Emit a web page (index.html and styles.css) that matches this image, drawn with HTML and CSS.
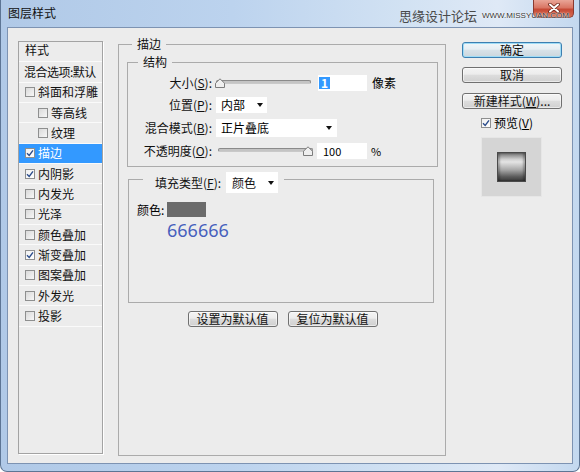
FILE: index.html
```html
<!DOCTYPE html>
<html lang="zh-CN">
<head>
<meta charset="utf-8">
<title>图层样式</title>
<link rel="stylesheet" href="styles.css">
</head>
<body>
<div class="window">
  <div class="titlebar">
    <span class="title">图层样式</span>
    <span class="watermark"><span class="wm-cn">思缘设计论坛</span><span class="wm-url">WWW.MISSYUAN.COM</span></span>
    <span class="close"><svg width="12" height="10" viewBox="0 0 12 10"><path d="M2 1.5 L10 8.5 M10 1.5 L2 8.5" stroke="#6a2318" stroke-width="3.6" stroke-linecap="round"/><path d="M2 1.5 L10 8.5 M10 1.5 L2 8.5" stroke="#ffffff" stroke-width="2" stroke-linecap="round"/></svg></span>
  </div>
  <div class="client">
    <div class="list">
      <div class="li head">样式</div>
      <div class="li head tight">混合选项:默认</div>
      <div class="li"><span class="cb"></span>斜面和浮雕</div>
      <div class="li sub"><span class="cb"></span>等高线</div>
      <div class="li sub"><span class="cb"></span>纹理</div>
      <div class="li sel"><span class="cb on"><svg viewBox="0 0 8 8" width="8" height="8"><path d="M1 4.2 L3.2 6.4 L7 1.4" fill="none" stroke="#2b4d8c" stroke-width="1.4"/></svg></span>描边</div>
      <div class="li"><span class="cb on"><svg viewBox="0 0 8 8" width="8" height="8"><path d="M1 4.2 L3.2 6.4 L7 1.4" fill="none" stroke="#2b4d8c" stroke-width="1.4"/></svg></span>内阴影</div>
      <div class="li"><span class="cb"></span>内发光</div>
      <div class="li"><span class="cb"></span>光泽</div>
      <div class="li"><span class="cb"></span>颜色叠加</div>
      <div class="li"><span class="cb on"><svg viewBox="0 0 8 8" width="8" height="8"><path d="M1 4.2 L3.2 6.4 L7 1.4" fill="none" stroke="#2b4d8c" stroke-width="1.4"/></svg></span>渐变叠加</div>
      <div class="li"><span class="cb"></span>图案叠加</div>
      <div class="li"><span class="cb"></span>外发光</div>
      <div class="li"><span class="cb"></span>投影</div>
    </div>

    <fieldset class="group main">
      <legend>描边</legend>
      <fieldset class="group struct">
        <legend>结构</legend>
        <div class="form">
          <label>大小(<u>S</u>):</label>
          <div class="ctrl">
            <div class="slider"><div class="track"></div><svg class="thumb thumb-left" width="10" height="10" viewBox="0 0 10 10"><path d="M0.5 9.5 V5.2 L5 0.8 L9.5 5.2 V9.5 Z" fill="#efefef" stroke="#7c7c7c"/></svg></div>
            <div class="input size-input"><span class="hl">1</span></div>
            <span class="unit">像素</span>
          </div>

          <label>位置(<u>P</u>):</label>
          <div class="ctrl">
            <div class="select pos-select"><span>内部</span><i class="arrow"></i></div>
          </div>

          <label>混合模式(<u>B</u>):</label>
          <div class="ctrl">
            <div class="select blend-select"><span>正片叠底</span><i class="arrow"></i></div>
          </div>

          <label>不透明度(<u>O</u>):</label>
          <div class="ctrl">
            <div class="slider opacity-slider"><div class="track"></div><svg class="thumb thumb-right" width="10" height="10" viewBox="0 0 10 10"><path d="M0.5 9.5 V5.2 L5 0.8 L9.5 5.2 V9.5 Z" fill="#efefef" stroke="#7c7c7c"/></svg></div>
            <div class="input opacity-input">100</div>
            <span class="pct">%</span>
          </div>
        </div>
      </fieldset>

      <fieldset class="group fill">
        <legend><div class="legend-row"><span class="legend-label">填充类型(<u>F</u>):</span><div class="select fill-type"><span>颜色</span><i class="arrow"></i></div></div></legend>
        <div class="color-row"><span class="color-label">颜色:</span><span class="swatch"></span></div>
        <div class="hex">666666</div>
      </fieldset>

      <div class="defaults">
        <div class="btn wide">设置为默认值</div>
        <div class="btn wide">复位为默认值</div>
      </div>
    </fieldset>

    <div class="side">
      <div class="btn side-btn primary">确定</div>
      <div class="btn side-btn gap9">取消</div>
      <div class="btn side-btn gap10">新建样式(<u>W</u>)...</div>
      <div class="preview-row"><span class="cb on"><svg viewBox="0 0 8 8" width="8" height="8"><path d="M1 4.2 L3.2 6.4 L7 1.4" fill="none" stroke="#2b4d8c" stroke-width="1.4"/></svg></span><span>预览(<u>V</u>)</span></div>
      <div class="preview"><div class="preview-sq"></div></div>
    </div>
  </div>
</div>
</body>
</html>
```
FILE: styles.css
```css
* { box-sizing: border-box; }
html, body { margin: 0; padding: 0; }
body {
  width: 580px;
  height: 472px;
  overflow: hidden;
  font-family: "Noto Sans CJK SC", "Noto Sans", sans-serif;
  font-size: 12px;
  color: #000;
  background: #fff;
}

.window {
  position: relative;
  width: 580px;
  height: 472px;
  display: flex;
  flex-direction: column;
  padding: 0 6px 7px 6px;
  border: 1px solid #5d7594;
  border-top: 0;
  border-radius: 0 0 7px 7px;
  background: linear-gradient(90deg, #b0c9e7 0%, #bcd3ee 40%, #d2e2f3 70%, #dfe9f6 86%, #c3d8ef 100%);
}

.titlebar {
  flex: none;
  height: 27px;
  display: flex;
  align-items: center;
}
.title {
  padding-left: 1px;
  margin-top: -2px;
  font-size: 12px;
  line-height: 14px;
  color: #111;
}
.watermark {
  margin-left: auto;
  margin-right: 4px;
  margin-top: 4px;
  display: flex;
  align-items: center;
  gap: 5px;
  position: relative;
  z-index: 2;
}
.wm-cn {
  font-size: 13px;
  line-height: 14px;
  color: #4a4a4a;
}
.wm-url {
  font-family: "Liberation Sans", sans-serif;
  font-size: 8px;
  line-height: 10px;
  color: #333;
  text-shadow: 0 0 2px #fff, 0 0 1px #fff;
}
.close {
  position: absolute;
  top: 0;
  right: 5px;
  width: 41px;
  height: 18px;
  border: 1px solid #8a3a30;
  border-top: 0;
  border-radius: 0 0 5px 5px;
  background: linear-gradient(#e9a597 0%, #d97664 45%, #c64a36 55%, #d66a50 100%);
  display: flex;
  justify-content: center;
  padding-top: 3px;
}
.close svg { display: block; }

.client {
  flex: 1;
  display: flex;
  align-items: flex-start;
  padding: 8px 0 0 10px;
  background: #ececec;
  border: 1px solid #7d93b2;
}

/* left style list */
.list {
  flex: none;
  width: 85px;
  height: 413px;
  margin-top: 5px;
  border: 1px solid #a3a3a3;
  box-shadow: 1px 1px 0 #fff;
}
.li {
  height: 20.33px;
  display: flex;
  align-items: center;
  padding-left: 6px;
  border-bottom: 1px solid #fafafa;
  white-space: nowrap;
  line-height: 14px;
  color: #111;
}
.li.head:first-child { padding-bottom: 3px; }
.li.tight { letter-spacing: -0.5px; padding-left: 5px; }
.li.sub { padding-left: 19px; }
.li.sel { background: #3399ff; color: #fff; }
.li .cb { margin-right: 3px; }

.cb {
  flex: none;
  width: 10px;
  height: 10px;
  border: 1px solid #8e8f8f;
  background: linear-gradient(135deg, #d9d9d9, #f7f7f7);
  display: inline-flex;
  align-items: center;
  justify-content: center;
}
.cb.on { background: linear-gradient(135deg, #f0f0f0, #ffffff); }
.cb svg { display: block; }

/* group boxes */
.group {
  margin: 0;
  min-width: 0;
  border: 1px solid #ababab;
}
.group > legend {
  padding: 0 5px;
  font-size: 12px;
  line-height: 16px;
  color: #111;
}
.main {
  flex: none;
  width: 328px;
  height: 420px;
  margin-left: 15px;
  padding: 2px 7px 0 8px;
}
.main > legend { margin-left: 5px; }
.struct { padding: 5px 0 7px 0; }
.struct > legend { margin-left: 10px; }

.form {
  display: grid;
  grid-template-columns: 84px 1fr;
  grid-template-rows: 16px 16px 18px 16px;
  row-gap: 6px;
  column-gap: 4px;
}
.form > label {
  text-align: right;
  white-space: nowrap;
  line-height: 16px;
  align-self: center;
  color: #111;
}
.ctrl {
  display: flex;
  align-items: center;
  height: 100%;
}

.slider {
  position: relative;
  flex: none;
  width: 95px;
  height: 16px;
}
.slider .track {
  margin-top: 5px;
  height: 4px;
  border: 1px solid #8a8a8a;
  border-bottom-color: #c9c9c9;
  border-radius: 2px;
  background: #c4c4c4;
}
.thumb { position: absolute; top: 3px; }
.thumb-left { left: -1px; }
.thumb-right { right: 0; }
.opacity-slider { margin-left: 2px; }

.input {
  flex: none;
  height: 16px;
  background: #fff;
  display: flex;
  align-items: center;
  line-height: 14px;
}
.size-input { width: 49px; margin-left: 7px; padding-left: 1px; }
.hl {
  background: #3399ff;
  color: #fff;
  padding: 0 2px;
  line-height: 12px;
  font-weight: bold;
}
.opacity-input { width: 50px; margin-left: 4px; padding-left: 6px; font-size: 11px; }
.unit { margin-left: 5px; line-height: 14px; }
.pct { margin-left: 4px; line-height: 14px; font-size: 11px; }

.select {
  flex: none;
  height: 16px;
  background: #fff;
  display: flex;
  align-items: center;
  justify-content: space-between;
  padding: 0 4px 0 5px;
  line-height: 14px;
}
.pos-select { width: 51px; }
.blend-select { width: 121px; height: 18px; padding-right: 5px; }
.arrow {
  width: 0;
  height: 0;
  border-left: 3.5px solid transparent;
  border-right: 3.5px solid transparent;
  border-top: 4px solid #111;
}

/* fill group */
.fill {
  margin: 5px 4px 0 1px;
  height: 131px;
  padding: 0 0 0 8px;
}
.fill > legend { margin-left: 6px; padding: 0 6px 0 12px; }
.legend-row {
  display: flex;
  align-items: flex-start;
  height: 14px;
}
.legend-label { margin-top: 4px; line-height: 14px; }
.fill-type {
  width: 52px;
  height: 21px;
  margin-left: 5px;
  padding: 0 4px 0 6px;
}
.color-row {
  margin-top: 16px;
  height: 15px;
  display: flex;
  align-items: center;
}
.color-label { width: 30px; line-height: 14px; }
.swatch {
  width: 39px;
  height: 15px;
  background: #6b6b6b;
}
.hex {
  margin: 3px 0 0 30px;
  font-family: "Noto Sans", sans-serif;
  font-size: 18px;
  line-height: 20px;
  color: #4660bd;
}

.defaults {
  margin-top: 8px;
  display: flex;
  justify-content: center;
  gap: 10px;
}

/* buttons */
.btn {
  height: 16px;
  border: 1px solid #707070;
  border-radius: 3px;
  background: linear-gradient(#f4f4f4 0%, #ececec 45%, #dddddd 50%, #d0d0d0 100%);
  box-shadow: inset 0 0 0 1px rgba(255, 255, 255, 0.55);
  display: flex;
  align-items: center;
  justify-content: center;
  font-size: 12px;
  line-height: 14px;
  white-space: nowrap;
  color: #111;
}
.btn.wide { width: 90px; }

.side {
  flex: none;
  width: 100px;
  margin-left: 16px;
  margin-top: 6px;
  display: flex;
  flex-direction: column;
}
.side-btn { width: 100px; }
.btn.primary {
  border-color: #3c7fb1;
  box-shadow: inset 0 0 0 1px #9fdcf6;
  background: linear-gradient(#f1f6f9 0%, #e6eef3 45%, #d8e2e8 50%, #cbd6dd 100%);
}
.gap9 { margin-top: 9px; }
.gap10 { margin-top: 10px; }
.preview-row {
  margin-top: 8px;
  margin-left: 19px;
  height: 12px;
  display: flex;
  align-items: center;
  gap: 3px;
  line-height: 14px;
}
.preview {
  margin-top: 8px;
  margin-left: 19px;
  width: 61px;
  height: 60px;
  background: #d5d5d5;
  border: 1px solid #e6e6e6;
  display: flex;
  align-items: center;
  justify-content: center;
}
.preview-sq {
  width: 29px;
  height: 30px;
  border: 1px solid #4a4a4a;
  background: linear-gradient(#707070 0%, #cfcfcf 22%, #e4e4e4 32%, #a8a8a8 60%, #5a5a5a 85%, #3a3a3a 100%);
  box-shadow: inset 2px 0 2px rgba(0,0,0,0.25), inset -2px 0 2px rgba(0,0,0,0.25);
}
```
